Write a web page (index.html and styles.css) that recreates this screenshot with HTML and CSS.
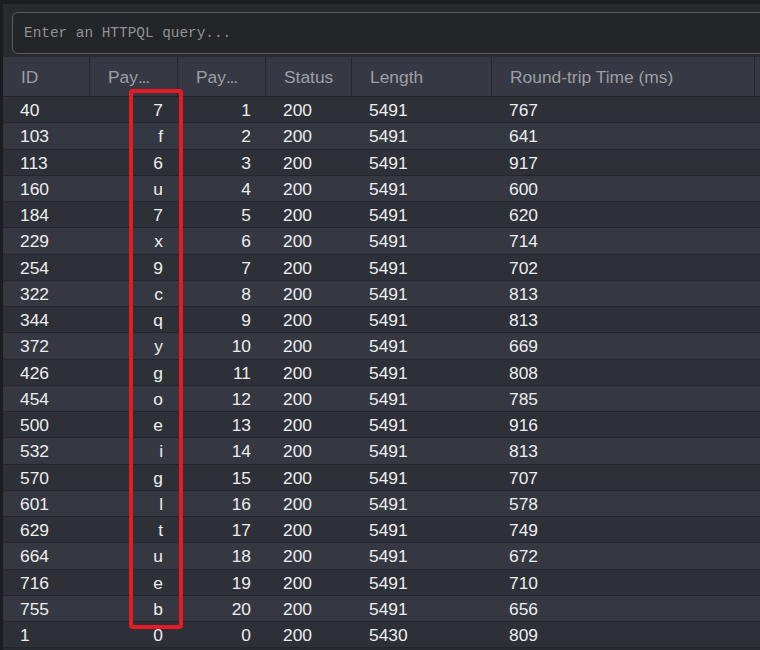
FILE: index.html
```html
<!DOCTYPE html>
<html>
<head>
<meta charset="utf-8">
<link rel="stylesheet" href="styles.css">
</head>
<body>
<div class="app">
  <div class="panel">
    <div class="search">
      <div class="query">Enter an HTTPQL query...</div>
    </div>
    <div class="table">
      <div class="row head">
        <div class="c">ID</div>
        <div class="c">Pay<span class="dots">...</span></div>
        <div class="c">Pay<span class="dots">...</span></div>
        <div class="c">Status</div>
        <div class="c">Length</div>
        <div class="c">Round-trip Time (ms)</div>
        <div class="c"></div>
      </div>
      <div class="row"><div class="c">40</div><div class="c r">7</div><div class="c r">1</div><div class="c">200</div><div class="c">5491</div><div class="c">767</div><div class="c"></div></div>
      <div class="row"><div class="c">103</div><div class="c r">f</div><div class="c r">2</div><div class="c">200</div><div class="c">5491</div><div class="c">641</div><div class="c"></div></div>
      <div class="row"><div class="c">113</div><div class="c r">6</div><div class="c r">3</div><div class="c">200</div><div class="c">5491</div><div class="c">917</div><div class="c"></div></div>
      <div class="row"><div class="c">160</div><div class="c r">u</div><div class="c r">4</div><div class="c">200</div><div class="c">5491</div><div class="c">600</div><div class="c"></div></div>
      <div class="row"><div class="c">184</div><div class="c r">7</div><div class="c r">5</div><div class="c">200</div><div class="c">5491</div><div class="c">620</div><div class="c"></div></div>
      <div class="row"><div class="c">229</div><div class="c r">x</div><div class="c r">6</div><div class="c">200</div><div class="c">5491</div><div class="c">714</div><div class="c"></div></div>
      <div class="row"><div class="c">254</div><div class="c r">9</div><div class="c r">7</div><div class="c">200</div><div class="c">5491</div><div class="c">702</div><div class="c"></div></div>
      <div class="row"><div class="c">322</div><div class="c r">c</div><div class="c r">8</div><div class="c">200</div><div class="c">5491</div><div class="c">813</div><div class="c"></div></div>
      <div class="row"><div class="c">344</div><div class="c r">q</div><div class="c r">9</div><div class="c">200</div><div class="c">5491</div><div class="c">813</div><div class="c"></div></div>
      <div class="row"><div class="c">372</div><div class="c r">y</div><div class="c r">10</div><div class="c">200</div><div class="c">5491</div><div class="c">669</div><div class="c"></div></div>
      <div class="row"><div class="c">426</div><div class="c r">g</div><div class="c r">11</div><div class="c">200</div><div class="c">5491</div><div class="c">808</div><div class="c"></div></div>
      <div class="row"><div class="c">454</div><div class="c r">o</div><div class="c r">12</div><div class="c">200</div><div class="c">5491</div><div class="c">785</div><div class="c"></div></div>
      <div class="row"><div class="c">500</div><div class="c r">e</div><div class="c r">13</div><div class="c">200</div><div class="c">5491</div><div class="c">916</div><div class="c"></div></div>
      <div class="row"><div class="c">532</div><div class="c r">i</div><div class="c r">14</div><div class="c">200</div><div class="c">5491</div><div class="c">813</div><div class="c"></div></div>
      <div class="row"><div class="c">570</div><div class="c r">g</div><div class="c r">15</div><div class="c">200</div><div class="c">5491</div><div class="c">707</div><div class="c"></div></div>
      <div class="row"><div class="c">601</div><div class="c r">l</div><div class="c r">16</div><div class="c">200</div><div class="c">5491</div><div class="c">578</div><div class="c"></div></div>
      <div class="row"><div class="c">629</div><div class="c r">t</div><div class="c r">17</div><div class="c">200</div><div class="c">5491</div><div class="c">749</div><div class="c"></div></div>
      <div class="row"><div class="c">664</div><div class="c r">u</div><div class="c r">18</div><div class="c">200</div><div class="c">5491</div><div class="c">672</div><div class="c"></div></div>
      <div class="row"><div class="c">716</div><div class="c r">e</div><div class="c r">19</div><div class="c">200</div><div class="c">5491</div><div class="c">710</div><div class="c"></div></div>
      <div class="row"><div class="c">755</div><div class="c r">b</div><div class="c r">20</div><div class="c">200</div><div class="c">5491</div><div class="c">656</div><div class="c"></div></div>
      <div class="row"><div class="c">1</div><div class="c r">0</div><div class="c r">0</div><div class="c">200</div><div class="c">5430</div><div class="c">809</div><div class="c"></div></div>
      <div class="highlight"></div>
    </div>
  </div>
</div>
</body>
</html>
```
FILE: styles.css
```css
html, body {
  margin: 0;
  padding: 0;
  background: #1c1d20;
  overflow: hidden;
}
.app {
  width: 760px;
  height: 650px;
  padding-top: 4px;
  box-sizing: border-box;
}
.panel {
  margin-left: 3px;
  background: #2a2b30;
  height: 646px;
  overflow: hidden;
}
.search {
  padding: 8px 0 3px 9px;
}
.query {
  height: 42px;
  box-sizing: border-box;
  width: 800px;
  border: 1px solid #5b5c60;
  border-radius: 6px;
  background: #242529;
  color: #909196;
  font-family: "Liberation Mono", monospace;
  font-size: 14.4px;
  line-height: 40px;
  padding-left: 11px;
}
.table {
  position: relative;
  font-family: "Liberation Sans", Arial, sans-serif;
  font-size: 17.4px;
  color: #ecedef;
}
.row {
  display: grid;
  grid-template-columns: 87px 88px 88px 86px 140px 263px 20px;
  height: 26.25px;
  box-sizing: border-box;
  border-bottom: 1px solid #24262b;
  background: #2e3038;
  align-items: center;
}
.row:nth-child(odd) {
  background: #353841;
}
.row.head {
  height: 40px;
  background: #363943;
  color: #9d9fa6;
  border-bottom: 1px solid #222328;
  align-items: stretch;
}
.head .c {
  display: flex;
  align-items: center;
  padding-left: 18px;
  border-right: 1px solid #25272c;
}
.dots {
  letter-spacing: -1.2px;
}
.c {
  padding: 2px 15px 0 17px;
  white-space: nowrap;
  overflow: hidden;
}
.c.r {
  text-align: right;
}
.highlight {
  position: absolute;
  left: 126px;
  top: 32px;
  width: 54px;
  height: 540px;
  box-sizing: border-box;
  border: 4px solid #e51a22;
  border-radius: 4px;
}
```
